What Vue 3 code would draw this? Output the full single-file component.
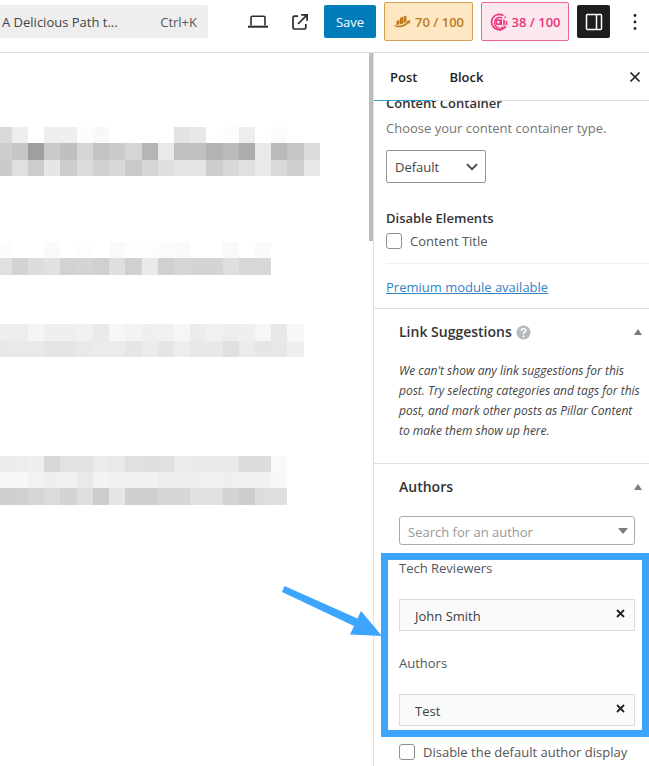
<script setup>
import { ref } from 'vue'

const container = ref('default')
const hideTitle = ref(false)
const hideAuthor = ref(false)
const search = ref('')

const groups = [
  { label: 'Tech Reviewers', people: ['John Smith'] },
  { label: 'Authors', people: ['Test'] },
]

const columns = [0, 12, 28, 44, 60, 77, 93, 109, 125, 142, 158, 174, 190, 206, 223, 239, 255, 271, 287, 304, 320]

// Each row lists the grey level of every redacted cell from left to right.
const blocks = [
  {
    name: 'title',
    tops: [0, 16, 33, 49],
    rows: [
      'd9 ee ff ef ef fc f8 ff ff ff ff e3 e8 ff fc ed ff fb ff ff',
      'cd c6 9f ca bf d6 c4 cb d5 b5 e9 c1 c1 b3 ba ad e9 ba c6 dc',
      'cb e0 cc e6 cc dc d0 d8 c9 d5 df e4 e4 cd d8 e0 e9 d9 cf e7',
    ],
  },
  {
    name: 'lead',
    tops: [0, 16, 33],
    rows: [
      'fc ff ff fa ff fd ff f9 fd fd fb fa ff ff f9 ff fa',
      'e0 d3 dd e1 d2 d4 d0 df d0 ea d0 d6 d4 d4 df d7 d8',
    ],
  },
  {
    name: 'text',
    tops: [0, 17, 33],
    rows: [
      'ee ed f5 ef ef f1 ea f7 f3 ef f0 f6 ec f0 ed ef f6 e8 f7',
      'e8 e9 e9 e5 e5 e9 eb eb e6 eb e5 ed e8 e8 e0 eb e6 e7 ef',
    ],
  },
  {
    name: 'closing',
    tops: [0, 16, 32, 49],
    rows: [
      'ec ed ef d8 e2 e3 eb e9 e0 df e0 eb ea e9 e9 dc dd f9',
      'f7 f7 f2 ef f0 e9 f3 f0 f0 f0 ed ef ef f1 ef f1 f1 f8',
      'cf d0 d5 db d3 df cc e6 cf ce d5 d6 e1 e1 d4 cd dd df',
    ],
  },
].map((b) => ({
  name: b.name,
  height: b.tops[b.tops.length - 1],
  cells: b.rows.flatMap((row, r) =>
    row.split(' ').map((g, c) => ({
      x: columns[c],
      y: b.tops[r],
      w: columns[c + 1] - columns[c],
      h: b.tops[r + 1] - b.tops[r],
      fill: '#' + g + g + g,
    }))
  ),
}))
</script>

<template>
  <div class="editor">
    <header class="topbar">
      <button class="command" type="button">
        <span>A Delicious Path t...</span>
        <span class="shortcut">Ctrl+K</span>
      </button>
      <div class="actions">
        <button class="icon-btn" type="button" aria-label="View">
          <svg width="22" height="16" viewBox="0 0 22 16" fill="none" stroke="#2b2b2b" stroke-width="1.6">
            <path d="M4 11.5V3.5Q4 2.2 5.3 2.2H16.700Q18 2.200 18 3.500V11.500" />
            <path d="M1 12.700H21" stroke-width="2" />
          </svg>
        </button>
        <button class="icon-btn" type="button" aria-label="View post">
          <svg width="18" height="18" viewBox="0 0 18 18" fill="none" stroke="#2b2b2b" stroke-width="1.700">
            <path d="M7 3.200H3.300Q2 3.200 2 4.500V14.700Q2 16 3.300 16H13.500Q14.800 16 14.800 14.700V11" />
            <path d="M7 11L15.800 2.200M10.200 1.900H16.100V7.800" />
          </svg>
        </button>
        <button class="save" type="button">Save</button>
        <button class="score seo" type="button">
          <svg width="18" height="14" viewBox="0 0 18 14" fill="#bd7b1d">
            <path d="M3.500 6L6.500 4.800V9.200L3.500 10.500ZM7 3L10 1.800V8.500L7 9.500ZM10.500 1.500L13.500 0.500V6.500L10.500 8.500Z" />
            <path d="M0 10.500Q3 9.800 4.500 10.800Q10 11.200 14.500 6.800L13.500 6.200L17.500 5L16.500 9L15.700 8Q10 13.500 3.500 12Q2 10.800 0 10.500Z" />
          </svg>
          <span>70 / 100</span>
        </button>
        <button class="score content" type="button">
          <svg width="18" height="18" viewBox="0 0 18 18" fill="none" stroke="#e6357c">
            <path d="M15.800 13.200A7.700 7.700 0 1 1 13.500 2.600" stroke-width="1.700" />
            <path d="M13.500 13.800A5.400 5.400 0 1 1 12.500 5" stroke-width="1.400" />
            <circle cx="8.300" cy="9.200" r="2.200" stroke-width="1.600" />
            <path d="M11.200 6.300V12.300M14 6.500V12.500M15.200 3.500V5M16.500 8V12" stroke-width="1.600" />
          </svg>
          <span>38 / 100</span>
        </button>
        <button class="panel-toggle" type="button" aria-label="Settings">
          <svg width="18" height="18" viewBox="0 0 18 18" fill="none" stroke="#fff" stroke-width="1.500">
            <rect x="1.500" y="1.500" width="15" height="15" rx="1" />
            <path d="M11.500 1.500V16.500" />
          </svg>
        </button>
        <button class="more" type="button" aria-label="Options">
          <svg width="4" height="18" viewBox="0 0 4 18" fill="#222">
            <circle cx="2" cy="2.500" r="1.400" /><circle cx="2" cy="9" r="1.400" /><circle cx="2" cy="15.500" r="1.400" />
          </svg>
        </button>
      </div>
    </header>

    <div class="body">
      <main class="canvas">
        <div class="blocks">
          <svg
            v-for="b in blocks"
            :key="b.name"
            :class="b.name"
            width="320"
            :height="b.height"
            shape-rendering="crispEdges"
            aria-hidden="true"
          >
            <rect v-for="(c, i) in b.cells" :key="i" :x="c.x" :y="c.y" :width="c.w" :height="c.h" :fill="c.fill" />
          </svg>
        </div>
        <div class="scrollbar"></div>
      </main>

      <aside class="sidebar">
        <nav class="tabs">
          <button class="tab active" type="button">Post</button>
          <button class="tab" type="button">Block</button>
          <button class="close" type="button" aria-label="Close">
            <svg width="12" height="12" viewBox="0 0 12 12" stroke="#222" stroke-width="1.700">
              <path d="M1.500 1.500L10.500 10.500M10.500 1.500L1.500 10.500" />
            </svg>
          </button>
        </nav>

        <section class="layout">
          <label class="heading clipped" for="container">Content Container</label>
          <p class="help">Choose your content container type.</p>
          <div class="select-wrap">
            <select id="container" v-model="container">
              <option value="default">Default</option>
            </select>
            <svg class="chevron" width="12" height="8" viewBox="0 0 12 8" fill="none" stroke="#444" stroke-width="1.800">
              <path d="M1 1.200L6 6.200L11 1.200" />
            </svg>
          </div>
          <h3 class="heading">Disable Elements</h3>
          <label class="check"><input v-model="hideTitle" type="checkbox" />Content Title</label>
          <div class="premium"><a href="#premium">Premium module available</a></div>
        </section>

        <section class="panel links">
          <h2>
            <span>Link Suggestions</span>
            <svg width="15" height="15" viewBox="0 0 15 15">
              <circle cx="7.500" cy="7.500" r="7" fill="#b4b9be" />
              <path d="M5.300 5.800Q5.300 3.700 7.500 3.700Q9.700 3.700 9.700 5.500Q9.700 6.500 8.500 7.100Q7.500 7.700 7.500 8.900" fill="none" stroke="#fff" stroke-width="1.600" />
              <circle cx="7.500" cy="11.200" r="1" fill="#fff" />
            </svg>
            <i class="triangle"></i>
          </h2>
          <p class="note">
            We can't show any link suggestions for this post. Try selecting categories and tags for this post, and mark
            other posts as Pillar Content to make them show up here.
          </p>
        </section>

        <section class="panel authors">
          <h2><span>Authors</span><i class="triangle"></i></h2>
          <div class="search">
            <input v-model="search" type="text" placeholder="Search for an author" aria-label="Search for an author" />
            <i class="caret"></i>
          </div>
          <div class="groups">
            <div v-for="g in groups" :key="g.label" class="group">
              <h4>{{ g.label }}</h4>
              <ul>
                <li v-for="p in g.people" :key="p">
                  <span>{{ p }}</span>
                  <button type="button" aria-label="Remove">
                    <svg width="9" height="9" viewBox="0 0 9 9" stroke="#222" stroke-width="1.800">
                      <path d="M1 1L8 8M8 1L1 8" />
                    </svg>
                  </button>
                </li>
              </ul>
            </div>
            <div class="highlight"></div>
            <svg class="arrow" width="104" height="54" viewBox="0 0 104 54" fill="#3da5fe">
              <path d="M6.500 1L79.500 33.500L83 26L104 51L72 49.500L76 41L4 7Z" />
            </svg>
          </div>
          <label class="check default-author">
            <input v-model="hideAuthor" type="checkbox" />Disable the default author display
          </label>
        </section>
      </aside>
    </div>
  </div>
</template>

<style>
body {
  background: #fff;
}
</style>

<style scoped>
.editor {
  display: flex;
  flex-direction: column;
  min-height: 100vh;
  overflow: hidden;
  font-family: 'Open Sans', 'Noto Sans', sans-serif;
  font-size: 13px;
  line-height: 20px;
  color: #3c4043;
}
.editor *,
.editor *::before {
  box-sizing: border-box;
}
button {
  margin: 0;
  padding: 0;
  border: 0;
  background: none;
  font: inherit;
  color: inherit;
}
svg {
  display: block;
  flex: none;
}
h2,
h3,
h4,
p,
ul {
  margin: 0;
  padding: 0;
}

.topbar {
  display: flex;
  justify-content: space-between;
  height: 53px;
  padding-right: 12px;
  border-bottom: 1px solid #e0e0e0;
}
.command {
  display: flex;
  align-items: center;
  justify-content: space-between;
  width: 208px;
  height: 33px;
  margin-top: 5px;
  padding: 0 11px 0 2px;
  border-radius: 0 2px 2px 0;
  background: #eee;
  color: #444;
  white-space: nowrap;
}
.shortcut {
  color: #555;
}
.actions {
  display: flex;
  align-items: center;
  gap: 8px;
  height: 43px;
}
.icon-btn {
  padding: 0 7px;
}
.more {
  padding-left: 15px;
}
.save {
  width: 52px;
  height: 33px;
  border-radius: 2px;
  background: #007cba;
  color: #fff;
}
.score {
  display: flex;
  align-items: center;
  justify-content: center;
  gap: 4px;
  width: 89px;
  height: 39px;
  border: 1px solid;
  border-radius: 2px;
  font-size: 13px;
  font-weight: 600;
  white-space: nowrap;
}
.seo {
  border-color: #d3a04e;
  background: #fee8c3;
  color: #bd7b1d;
}
.content {
  width: 88px;
  border-color: #ea6399;
  background: #fee8f0;
  color: #e6357c;
}
.panel-toggle {
  display: flex;
  align-items: center;
  justify-content: center;
  width: 33px;
  height: 33px;
  border-radius: 2px;
  background: #1e1e1e;
}

.body {
  display: flex;
  flex: 1;
}
.canvas {
  display: flex;
  flex: 1;
  justify-content: space-between;
  min-width: 0;
}
.blocks {
  padding-top: 74px;
}
.lead {
  margin-top: 66px;
}
.text {
  margin-top: 49px;
}
.closing {
  margin-top: 99px;
}
.scrollbar {
  flex: none;
  width: 4px;
  height: 188px;
  background: #bdbdbd;
}

.sidebar {
  flex: none;
  width: 276px;
  border-left: 1px solid #e0e0e0;
}
.tabs {
  display: flex;
  height: 48px;
  border-bottom: 1px solid #e0e0e0;
}
.tab {
  height: 48px;
  padding: 0 16px;
  font-weight: 600;
  color: #1e1e1e;
}
.tab.active {
  border-bottom: 1px solid #3c9fd0;
}
.close {
  margin-left: auto;
  padding-right: 8px;
}
.layout {
  padding: 0 0 11px 12px;
  overflow: hidden;
}
.heading {
  display: block;
  font-size: 13px;
  line-height: 20px;
  font-weight: 600;
  color: #333;
}
.clipped {
  margin-top: -8px;
}
.help {
  margin-top: 5px;
  color: #757575;
}
.select-wrap {
  position: relative;
  width: 100px;
  margin: 12px 0 25px;
}
select {
  display: block;
  width: 100%;
  height: 33px;
  padding: 0 8px;
  border: 1px solid #949494;
  border-radius: 2px;
  background: #fff;
  appearance: none;
  font: inherit;
  color: #444;
}
.chevron {
  position: absolute;
  top: 13px;
  right: 8px;
  pointer-events: none;
}
.check {
  display: flex;
  align-items: center;
  gap: 8px;
  margin-top: 3px;
  color: #555;
}
.check input {
  flex: none;
  width: 16px;
  height: 16px;
  margin: 0;
  border: 1px solid #8c8f94;
  border-radius: 3px;
  background: #fff;
  appearance: none;
}
.premium {
  margin-top: 12px;
  padding-top: 13px;
  border-top: 1px solid #f0f0f0;
}
.premium a {
  color: #3582c4;
}

.panel {
  padding: 0 14px 0 25px;
  border-top: 1px solid #e0e0e0;
}
.panel h2 {
  display: flex;
  align-items: center;
  gap: 4px;
  height: 46px;
  font-size: 14px;
  font-weight: 600;
  color: #333;
}
.triangle,
.caret {
  border: solid transparent;
  border-width: 0 4px 6px;
  border-bottom-color: #787c82;
}
.triangle {
  margin: 0 -7px 0 auto;
}
.links {
  padding-right: 7px;
}
.links .triangle {
  margin-right: 0;
}
.note {
  padding: 6px 0 22px;
  font-size: 12px;
  font-style: italic;
  color: #444;
}
.search {
  position: relative;
  margin-top: 6px;
}
.search input {
  display: block;
  width: 100%;
  height: 29px;
  padding: 2px 8px 0;
  border: 1px solid #a7aaad;
  border-radius: 3px;
  background: #fff;
  font: inherit;
  color: #444;
}
.search input::placeholder {
  color: #999;
  opacity: 1;
}
.caret {
  position: absolute;
  top: 12px;
  right: 7px;
  border-width: 6px 5px 0;
  border-top-color: #787c82;
}
.groups {
  position: relative;
  padding: 13px 0 16px;
}
.group + .group {
  margin-top: 22px;
}
.group h4 {
  font-size: 13px;
  font-weight: 400;
  color: #50575e;
}
.group ul {
  margin-top: 21px;
  list-style: none;
}
.group li {
  display: flex;
  align-items: center;
  justify-content: space-between;
  height: 32px;
  padding: 2px 9px 0 15px;
  border: 1px solid #dcdcde;
  background: #fafafa;
}
.group li button {
  padding-bottom: 6px;
}
.highlight {
  position: absolute;
  top: 8px;
  right: -14px;
  bottom: 5px;
  left: -18px;
  border: 7px solid #3da5fe;
  pointer-events: none;
}
.arrow {
  position: absolute;
  top: 40px;
  right: 253px;
  pointer-events: none;
}
.default-author {
  margin-top: 0;
  white-space: nowrap;
}
</style>
